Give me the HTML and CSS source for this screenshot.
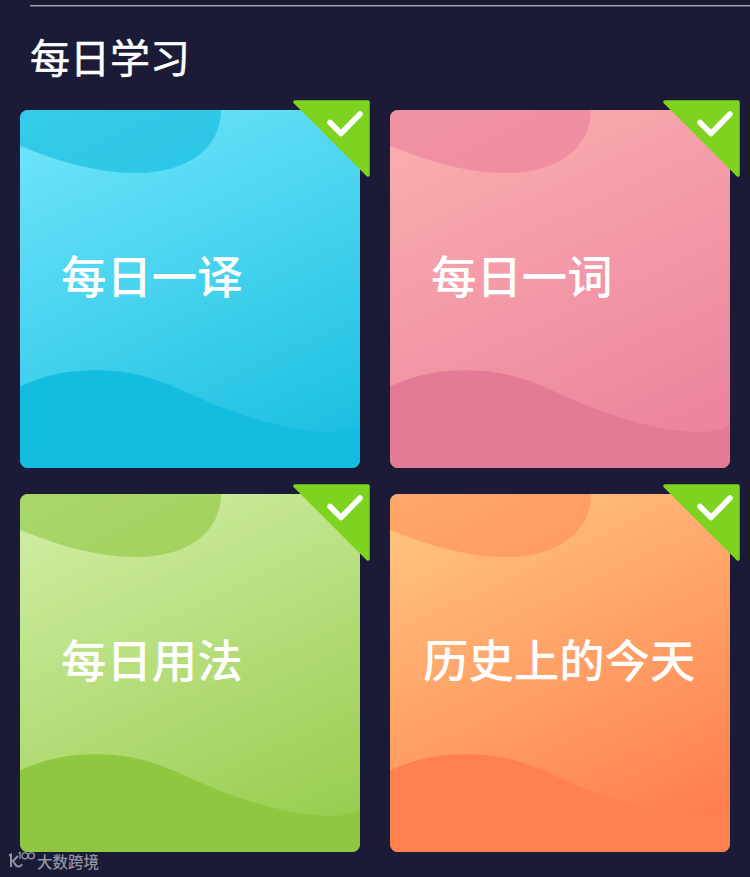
FILE: index.html
```
<!DOCTYPE html>
<html lang="zh-CN">
<head>
    <meta charset="utf-8">
    <title>每日学习</title>
    <link rel="stylesheet" href="styles.css">
</head>
<body>
    <!-- shapes shared by every card -->
    <svg class="defs" width="0" height="0">
        <symbol id="waves" viewBox="0 0 340 358">
            <path class="blob" d="M0 0H201C201 38 167 63 117 63C76 63 38 51 0 36Z"/>
            <path class="wave" d="M0 276.500C25 265 49 260.300 76 260.300C107 260.300 133 267 160 279.500C206 301 263 322 312 322C323 322 332 319 340 315.500V358H0Z"/>
        </symbol>
        <symbol id="check" viewBox="0 0 77 77">
            <path d="M2 2H75V75Z" fill="#7ed321" stroke="#7ed321" stroke-width="3.500" stroke-linejoin="round"/>
            <path d="M37 22.500L48 33.500L67 14" fill="none" stroke="#fff" stroke-width="5.500" stroke-linecap="round" stroke-linejoin="round"/>
        </symbol>
    </svg>

    <hr>
    <h1>每日学习</h1>

    <div class="cards">
        <div class="card blue">
            <svg class="bg"><use href="#waves"/></svg>
            <svg class="badge"><use href="#check"/></svg>
            <h2>每日一译</h2>
        </div>
        <div class="card pink">
            <svg class="bg"><use href="#waves"/></svg>
            <svg class="badge"><use href="#check"/></svg>
            <h2>每日一词</h2>
        </div>
        <div class="card green">
            <svg class="bg"><use href="#waves"/></svg>
            <svg class="badge"><use href="#check"/></svg>
            <h2>每日用法</h2>
        </div>
        <div class="card orange">
            <svg class="bg"><use href="#waves"/></svg>
            <svg class="badge"><use href="#check"/></svg>
            <h2 class="long">历史上的今天</h2>
        </div>
    </div>

    <div class="watermark">
        <svg class="logo" viewBox="0 0 28 20" fill="none" stroke="#9293a4">
            <path d="M1 4.500L3 3.500V16M10 5L5 10L8 14.500C10 16.500 13 15.500 14 13" stroke-width="2"/>
            <path d="M10.500 2.500L12 1.500V8" stroke-width="1.300"/>
            <circle cx="17" cy="4.700" r="3.100" stroke-width="1.300"/>
            <circle cx="23.300" cy="4.700" r="3.100" stroke-width="1.300"/>
        </svg>
        <span>大数跨境</span>
    </div>
</body>
</html>
```
FILE: styles.css
```
body{
    margin: 0;
    height: 877px;
    overflow: hidden;
    background-color: #1b1b38;
    color: white;
    font-family: "Noto Sans CJK SC", sans-serif;
}
.defs{
    display: block;
}
hr{
    height: 1px;
    margin: 5px 0 0 30px;
    border: none;
    border-bottom: 1px solid #55556b;
    background-color: #a5a5b3;
}
h1{
    margin: 28px 0 0 30px;
    height: 75px;
    font-size: 40px;
    line-height: 42px;
    font-weight: 400;
    -webkit-text-stroke: 0.5px white;
}
.cards{
    display: grid;
    grid-template-columns: 340px 340px;
    grid-auto-rows: 358px;
    gap: 26px 30px;
    margin-left: 20px;
}
.card{
    position: relative;
    display: flex;
    align-items: center;
    border-radius: 8px;
}
.bg{
    position: absolute;
    top: 0;
    left: 0;
    width: 340px;
    height: 358px;
    border-radius: 8px;
}
.blob{
    fill: var(--blob);
}
.wave{
    fill: var(--wave);
}
.badge{
    position: absolute;
    top: -10px;
    right: -10px;
    width: 77px;
    height: 77px;
}
h2{
    position: relative;
    margin: 0 0 31px 41px;
    font-size: 45.400px;
    line-height: 60px;
    font-weight: 500;
    white-space: nowrap;
}
h2.long{
    margin-left: 33px;
}

/* card colours */
.blue{
    --blob: rgba(20, 188, 223, 0.65);
    --wave: #14bcdf;
    background: linear-gradient(155deg, #74e6fc, #14bcdf);
}
.pink{
    --blob: rgba(233, 127, 155, 0.6);
    --wave: #e37b97;
    background: linear-gradient(155deg, #fcb0b0, #e97f9b);
}
.green{
    --blob: rgba(143, 199, 65, 0.6);
    --wave: #8fc741;
    background: linear-gradient(155deg, #d3efa8, #93ca48);
}
.orange{
    --blob: rgba(255, 129, 79, 0.45);
    --wave: #ff814f;
    background: linear-gradient(155deg, #ffc883, #ff7749);
}

.watermark{
    position: absolute;
    left: 8px;
    top: 851px;
    display: flex;
    color: #9293a4;
}
.logo{
    width: 28px;
    height: 20px;
}
.watermark span{
    margin-left: 1px;
    font-size: 15.500px;
    line-height: 21px;
    font-weight: 500;
}
```
